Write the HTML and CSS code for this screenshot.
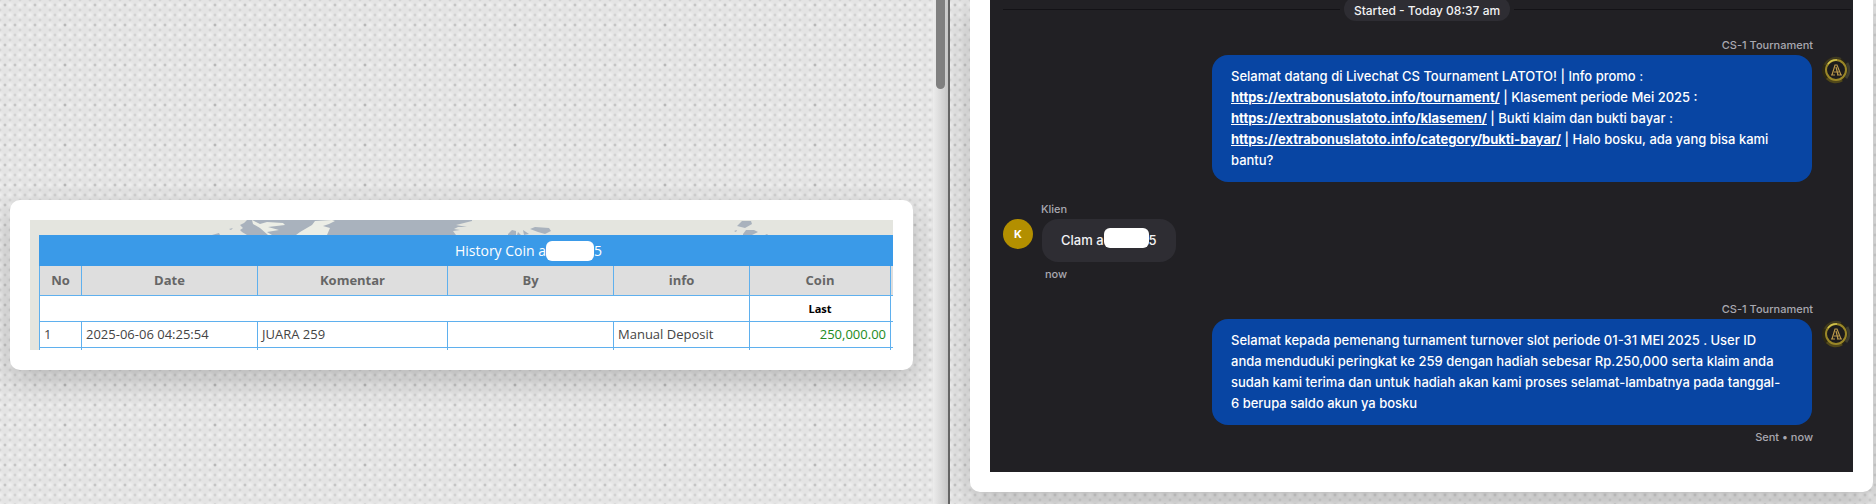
FILE: index.html
```html
<!doctype html>
<html lang="id">

<head>
<meta charset="utf-8">
<meta name="viewport" content="width=device-width, initial-scale=1.0">
<title>Bukti klaim dan bukti bayar</title>
<link rel="stylesheet" href="styles.css">
</head>

<body>
	<!-- logo used by every CS message -->
	<svg class="defs" width="0" height="0">
		<symbol id="logo" viewBox="0 0 30 30">
			<circle cx="14" cy="15" r="13" fill="#2c2813"/>
			<path d="M4 10A12 12 0 0 1 20 4" fill="none" stroke="#3f3a22" stroke-width="2"/>
			<path d="M6 23A12 12 0 0 0 21 25" fill="none" stroke="#51481a" stroke-width="3"/>
			<path d="M26 8A13 13 0 0 1 25 23" fill="none" stroke="#3f3e30" stroke-width="3"/>
			<circle cx="15" cy="15" r="10" fill="#1d1c1c" stroke="#9a8728" stroke-width="2"/>
			<path d="M7 9A10 10 0 0 1 16 5" fill="none" stroke="#d0c24e" stroke-width="1.5"/>
			<path d="M10 20H14M16 20H21M11 20L14 10H16L20 20M13 17H18M15 12L17 20" fill="none" stroke="#b8964a" stroke-width="1.2"/>
		</symbol>
	</svg>

	<div class="pane left">
		<div class="card">
			<div class="shot">
				<svg class="map" viewBox="0 0 863 15" preserveAspectRatio="xMinYMin slice">
					<g fill="#a9b2bd">
						<path d="M217 0L214 3L210 5L213 8L210 10L212 12L217 15H426L423 11L430 10L424 9L428 7L437 7L426 5L434 3L442 1V0Z"/>
						<path d="M199 9L203 8L201 10ZM182 15L189 13L190 15Z"/>
						<path d="M478 14L482 10L486 11L486 15H478ZM488 12L491 15H487ZM493 10L499 14L494 15ZM500 9L505 7L519 8L521 11L515 14L508 12Z"/>
						<path d="M707 6L712 1L721 1L722 4L715 8ZM704 11L707 10L706 12ZM713 14L716 10H724L728 12L722 15H713ZM735 15L737 14L738 15Z"/>
					</g>
					<g fill="#eceee6">
						<path d="M222 0L230 4L237 2L253 3L255 5L238 7L249 10L237 12L242 15H238L230 8L223 4Z"/>
						<path d="M266 15L270 12L282 5L285 1L302 0L305 1L299 4L293 6L300 8L297 15Z"/>
					</g>
				</svg>
				<table class="history">
					<colgroup>
						<col class="c-no"><col class="c-date"><col class="c-note"><col class="c-by"><col class="c-info"><col class="c-coin"><col class="c-rest">
					</colgroup>
					<tr class="title"><td colspan="7">History Coin a<span class="mask"></span>5</td></tr>
					<tr class="head">
						<th>No</th>
						<th>Date</th>
						<th>Komentar</th>
						<th>By</th>
						<th>info</th>
						<th>Coin</th>
						<th></th>
					</tr>
					<tr class="last">
						<td colspan="5"></td>
						<td>Last</td>
						<td></td>
					</tr>
					<tr>
						<td>1</td>
						<td>2025-06-06 04:25:54</td>
						<td>JUARA 259</td>
						<td></td>
						<td>Manual Deposit</td>
						<td class="coin">250,000.00</td>
						<td></td>
					</tr>
					<tr>
						<td></td>
						<td></td>
						<td></td>
						<td></td>
						<td></td>
						<td></td>
						<td></td>
					</tr>
				</table>
			</div>
		</div>
		<div class="scrollbar"><div class="thumb"></div></div>
	</div>

	<div class="pane right">
		<div class="card">
			<div class="chat">
				<div class="started"><span>Started - Today 08:37 am</span></div>

				<div class="message agent">
					<div class="name">CS-1 Tournament</div>
					<div class="row">
						<div class="bubble">Selamat datang di Livechat CS Tournament LATOTO! | Info promo : <a href="#">https://extrabonuslatoto.info/tournament/</a> | Klasement periode Mei 2025 : <a href="#">https://extrabonuslatoto.info/klasemen/</a> | Bukti klaim dan bukti bayar : <a href="#">https://extrabonuslatoto.info/category/bukti-bayar/</a> | Halo bosku, ada yang bisa kami bantu?</div>
						<svg class="avatar"><use href="#logo"/></svg>
					</div>
				</div>

				<div class="message client">
					<div class="name">Klien</div>
					<div class="row">
						<div class="avatar">K</div>
						<div class="bubble">Clam a<span class="mask"></span>5</div>
					</div>
					<div class="status">now</div>
				</div>

				<div class="message agent">
					<div class="name">CS-1 Tournament</div>
					<div class="row">
						<div class="bubble">Selamat kepada pemenang turnament turnover slot periode 01-31 MEI 2025 . User ID anda menduduki peringkat ke 259 dengan hadiah sebesar Rp.250,000 serta klaim anda sudah kami terima dan untuk hadiah akan kami proses selamat-lambatnya pada tanggal-<wbr>6 berupa saldo akun ya bosku</div>
						<svg class="avatar"><use href="#logo"/></svg>
					</div>
					<div class="status">Sent • now</div>
				</div>
			</div>
		</div>
	</div>
</body>
</html>
```
FILE: styles.css
```css
	* {
		box-sizing: border-box;
	}
	body {
		margin: 0;
		height: 100vh;
		display: grid;
		grid-template-columns: 950fr 926fr;
		overflow: hidden;
		font-family: "Inter", Arial, sans-serif;
	}
	.defs {
		position: absolute;
	}

	/* paper background */
	.pane {
		min-width: 0;
		display: flex;
		background-color: #e4e4e4;
		background-image:
			radial-gradient(circle at 5px 5px, rgba(0,0,0,.1) 0, transparent 2px),
			radial-gradient(circle at 15px 25px, rgba(0,0,0,.1) 0, transparent 2px),
			radial-gradient(circle at 5px 5px, rgba(0,0,0,.12) 0, transparent 2px),
			radial-gradient(circle at 5px 5px, rgba(0,0,0,.1) 0, transparent 2px),
			radial-gradient(circle at 5px 5px, rgba(255,255,255,.5) 0, transparent 4px);
		background-size: 30px 20px, 50px 40px, 10px 10px, 10px 10px, 10px 10px;
		background-position: 0 0, 0 0, 0 0, 5px 5px, 5px 0;
	}
	.left {
		align-items: stretch;
		border-right: 2px solid #666;
	}
	.card {
		flex: 1;
		min-width: 0;
		padding: 20px;
		background: #fff;
		border-radius: 10px;
		box-shadow: 0 10px 30px rgba(0,0,0,.2);
	}
	.left .card {
		align-self: flex-start;
		margin: 200px 20px 0 10px;
	}
	.right {
		align-items: flex-start;
	}
	.right .card {
		margin: 0 3px 0 20px;
		padding-top: 0;
		border-radius: 0 0 10px 10px;
	}

	.scrollbar {
		width: 15px;
		padding: 0 3px;
		background: linear-gradient(90deg, #ececec, #c8c8c8);
	}
	.thumb {
		height: 89px;
		background: #808080;
		border-radius: 0 0 5px 5px;
	}

	/* white box over the user id */
	.mask {
		display: inline-block;
		height: 20px;
		background: #fff;
		border-radius: 6px;
		vertical-align: middle;
	}

	/* history table */
	.shot {
		height: 130px;
		overflow: hidden;
		background: #e4e5df;
		font-family: "Open Sans", "Noto Sans", sans-serif;
	}
	.map {
		display: block;
		width: 100%;
		height: 15px;
	}
	.history {
		width: calc(100% + 115px);
		margin-left: 9px;
		table-layout: fixed;
		border-collapse: collapse;
		background: #fff;
		font-size: 13px;
		line-height: 20px;
		color: #444;
	}
	.c-no { width: 42px; }
	.c-date { width: 176px; }
	.c-note { width: 190px; }
	.c-by { width: 166px; }
	.c-info { width: 136px; }
	.c-coin { width: 141px; }
	.c-rest { width: 127px; }
	.history th,
	.history td {
		height: 26px;
		padding: 0 4px 2px;
		border: 1px solid #5fb0ee;
	}
	.history .title td {
		height: 30px;
		padding-bottom: 0;
		background: #3a9ae8;
		border-color: #3a9ae8;
		color: #fff;
		font-size: 14px;
		text-align: center;
	}
	.title .mask {
		width: 48px;
		margin: -5px 0 -3px;
	}
	.history th {
		height: 30px;
		background: #dedede;
		color: #666;
	}
	.history .last td {
		padding-bottom: 0;
		color: #000;
		font-size: 11px;
		font-weight: bold;
		text-align: center;
	}
	.history .coin {
		color: #228b22;
		text-align: right;
	}

	/* chat */
	.chat {
		overflow: hidden;
		padding: 0 2px 27px 13px;
		background: #212024;
		color: #f2f2f4;
		font-size: 13px;
		font-weight: 500;
		line-height: 21px;
	}
	.started {
		display: flex;
		align-items: center;
		gap: 4px;
		margin-top: -3px;
		margin-bottom: 16px;
		font-size: 12px;
	}
	.started:before,
	.started:after {
		content: "";
		flex: 1;
		height: 1px;
		background: #131216;
	}
	.started span {
		height: 24px;
		padding: 3px 10px 0;
		background: #2e2d33;
		border-radius: 12px;
	}
	.message {
		display: flex;
		flex-direction: column;
	}
	.message + .message {
		margin-top: 19px;
	}
	.agent {
		align-items: flex-end;
	}
	.name,
	.status {
		margin: 0 38px;
		font-size: 11px;
		line-height: 16px;
		color: #a9a8b0;
	}
	.name {
		margin-bottom: 2px;
	}
	.status {
		margin-top: 4px;
	}
	.client .status {
		margin-left: 42px;
	}
	.row {
		display: flex;
		align-items: flex-start;
		gap: 9px;
		max-width: 100%;
	}
	.bubble {
		padding: 11px 19px;
		border-radius: 16px;
		background: #2e2d33;
	}
	.agent .bubble {
		width: 600px;
		padding-right: 26px;
		background: #0845a3;
		color: #fff;
	}
	.bubble a {
		color: #fff;
		font-weight: bold;
	}
	.bubble .mask {
		width: 45px;
		margin: -7px 0 -1px;
	}
	.avatar {
		flex: none;
		width: 30px;
		height: 30px;
		border-radius: 50%;
		text-align: center;
	}
	div.avatar {
		background: #b38f00;
		color: #fff;
		font-size: 11px;
		font-weight: bold;
		line-height: 30px;
	}
```
